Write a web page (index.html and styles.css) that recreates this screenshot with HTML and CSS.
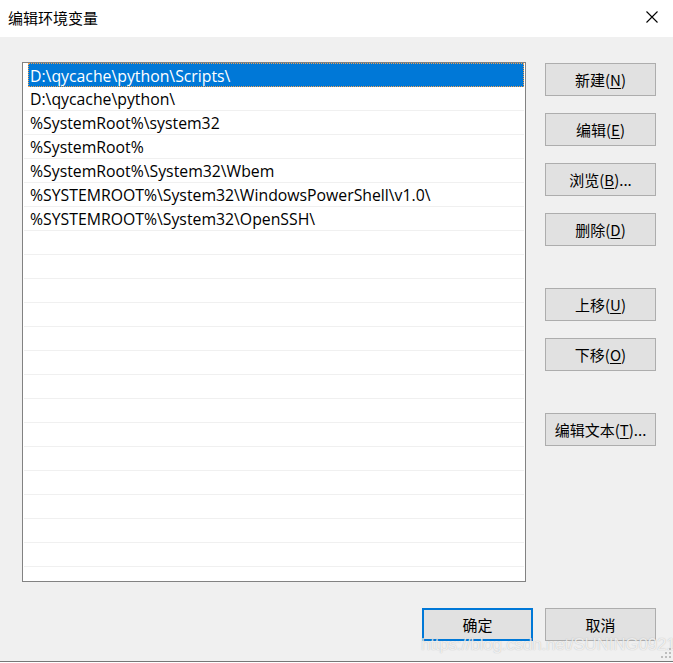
FILE: index.html
```html
<!DOCTYPE html>
<html lang="zh-CN">
<head>
    <meta charset="UTF-8">
    <meta name="viewport" content="width=device-width, initial-scale=1.0">
    <title>编辑环境变量</title>
    <link rel="stylesheet" href="styles.css">
</head>
<body>
    <div class="window">
        <div class="titlebar">
            <span class="title">编辑环境变量</span>
            <svg class="close" width="12" height="12" viewBox="0 0 12 12">
                <path d="M0.5 0.5 L11.5 11.5 M11.5 0.5 L0.5 11.5" stroke="#000" stroke-width="1.1" fill="none"/>
            </svg>
        </div>
        <div class="dialog">
            <div class="main">
                <div class="list">
                    <div class="row selected"><span>D:\qycache\python\Scripts\</span></div>
                    <div class="row"><span>D:\qycache\python\</span></div>
                    <div class="row"><span>%SystemRoot%\system32</span></div>
                    <div class="row"><span>%SystemRoot%</span></div>
                    <div class="row"><span>%SystemRoot%\System32\Wbem</span></div>
                    <div class="row"><span>%SYSTEMROOT%\System32\WindowsPowerShell\v1.0\</span></div>
                    <div class="row"><span>%SYSTEMROOT%\System32\OpenSSH\</span></div>
                    <div class="row"></div>
                    <div class="row"></div>
                    <div class="row"></div>
                    <div class="row"></div>
                    <div class="row"></div>
                    <div class="row"></div>
                    <div class="row"></div>
                    <div class="row"></div>
                    <div class="row"></div>
                    <div class="row"></div>
                    <div class="row"></div>
                    <div class="row"></div>
                    <div class="row"></div>
                    <div class="row"></div>
                    <div class="row"></div>
                </div>
                <div class="side">
                    <div class="group">
                        <button class="btn">新建(<u>N</u>)</button>
                        <button class="btn">编辑(<u>E</u>)</button>
                        <button class="btn">浏览(<u>B</u>)...</button>
                        <button class="btn">删除(<u>D</u>)</button>
                    </div>
                    <div class="group">
                        <button class="btn">上移(<u>U</u>)</button>
                        <button class="btn">下移(<u>O</u>)</button>
                    </div>
                    <div class="group">
                        <button class="btn">编辑文本(<u>T</u>)...</button>
                    </div>
                </div>
            </div>
            <div class="footer">
                <button class="btn default">确定</button>
                <button class="btn">取消</button>
            </div>
            <div class="watermark">https://blog.csdn.net/SUNING0921</div>
            <svg class="grip" width="10" height="10" viewBox="0 0 10 10">
                <rect x="8" y="0" width="2" height="2" fill="#bdbdbd"/>
                <rect x="4" y="4" width="2" height="2" fill="#bdbdbd"/>
                <rect x="8" y="4" width="2" height="2" fill="#bdbdbd"/>
                <rect x="0" y="8" width="2" height="2" fill="#bdbdbd"/>
                <rect x="4" y="8" width="2" height="2" fill="#bdbdbd"/>
                <rect x="8" y="8" width="2" height="2" fill="#bdbdbd"/>
            </svg>
        </div>
    </div>
</body>
</html>
```

FILE: styles.css
```css
body {
    margin: 0;
    font-family: "Noto Sans", "Noto Sans CJK SC", sans-serif;
    font-size: 15px;
    color: #000;
}
.window {
    width: 673px;
    height: 663px;
    overflow: hidden;
}
.titlebar {
    height: 37px;
    background-color: #fff;
    display: flex;
    align-items: center;
    justify-content: space-between;
    padding: 0 15px 0 8px;
    box-sizing: border-box;
}
.title {
    font-family: "Noto Sans CJK SC", sans-serif;
    font-size: 15px;
    margin-top: -2px;
}
.close {
    margin-top: -3px;
}
.dialog {
    position: relative;
    height: 625px;
    background-color: #f0f0f0;
    border-bottom: 1px solid #777;
    padding-top: 25px;
    box-sizing: border-box;
}
.main {
    display: flex;
    padding-left: 22px;
}
.list {
    width: 504px;
    height: 520px;
    box-sizing: border-box;
    border: 1px solid #828282;
    background-color: #fff;
    overflow: hidden;
    padding: 0 1px 0 1px;
}
.row {
    height: 24px;
    box-sizing: border-box;
    border-bottom: 1px solid #f0f0f0;
    display: flex;
    align-items: center;
    padding-left: 6px;
    white-space: nowrap;
    font-family: "Open Sans", sans-serif;
    font-size: 15.8px;
}
.row span {
    padding-top: 1px;
}
.row.selected {
    margin: 0 0 0 4px;
    padding-left: 1px;
    background-color: #0078d7;
    color: #fff;
    border: 1px dotted #f0a050;
    height: 24px;
}
.side {
    margin-left: 19px;
    padding-top: 1px;
    display: flex;
    flex-direction: column;
    gap: 42px;
}
.group {
    display: flex;
    flex-direction: column;
    gap: 17px;
}
.btn {
    width: 111px;
    height: 33px;
    background-color: #e1e1e1;
    border: 1px solid #adadad;
    font-family: "Noto Sans CJK SC", sans-serif;
    font-size: 15px;
    color: #000;
    padding: 0;
    margin: 0;
    box-sizing: border-box;
}
.btn u {
    text-underline-offset: 2px;
}
.footer {
    display: flex;
    justify-content: flex-end;
    gap: 12px;
    padding-right: 17px;
    margin-top: 26px;
}
.default {
    border: 2px solid #0078d7;
    width: 111px;
}
.watermark {
    position: absolute;
    left: 421px;
    top: 598px;
    font-family: "Liberation Sans", sans-serif;
    font-size: 17px;
    line-height: 20px;
    color: rgba(255, 255, 255, 0.75);
    text-shadow: 0 0 1px rgba(120, 120, 120, 0.5);
    white-space: nowrap;
    letter-spacing: -0.2px;
}
.grip {
    position: absolute;
    right: 2px;
    bottom: 3px;
}
```
